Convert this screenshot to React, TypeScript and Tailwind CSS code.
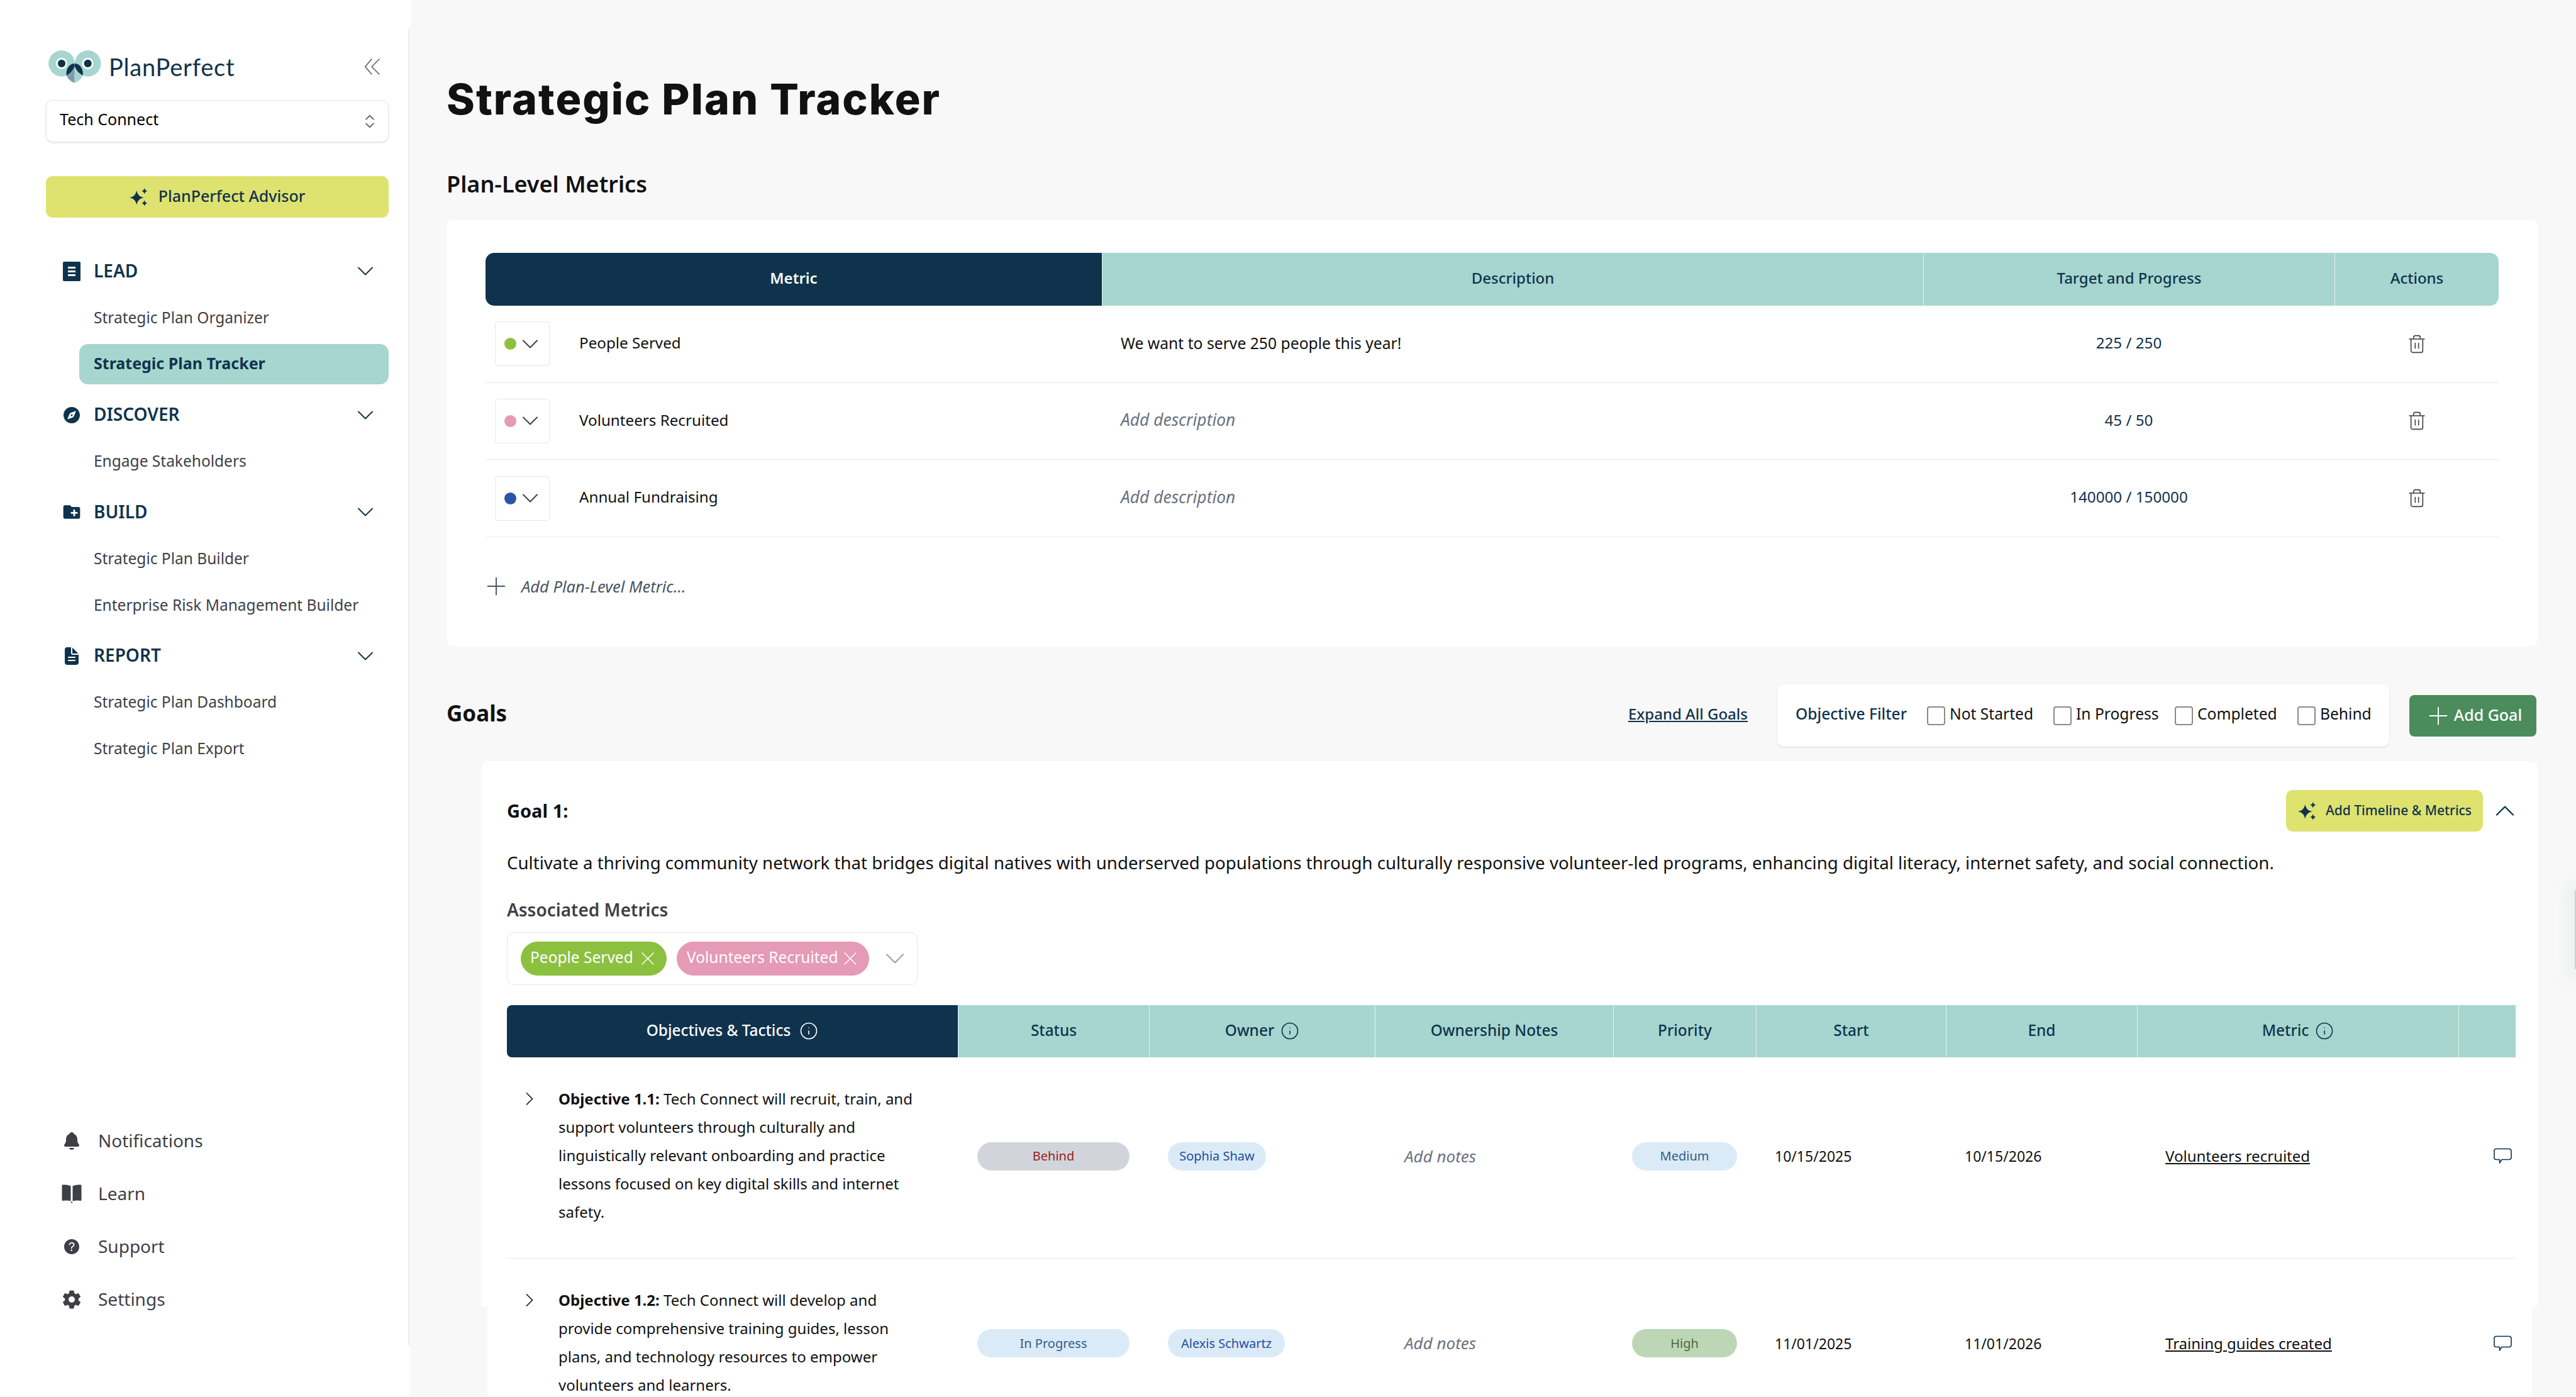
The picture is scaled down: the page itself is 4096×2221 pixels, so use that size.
import { ChevronDown, ChevronRight, ChevronUp, ChevronsUpDown, Info, Plus, Trash2, X } from "lucide-react";
import { IoCompass, IoDocumentText, IoHelpCircle, IoNotifications, IoSettingsSharp } from "react-icons/io5";
import { MdCreateNewFolder } from "react-icons/md";
import type { ReactNode } from "react";

const NAVY = "#0f334d";

function star(cx: number, cy: number, r: number) {
  return `M${cx} ${cy - r}Q${cx + r * 0.15} ${cy - r * 0.15} ${cx + r} ${cy}Q${cx + r * 0.15} ${cy + r * 0.15} ${cx} ${cy + r}Q${cx - r * 0.15} ${cy + r * 0.15} ${cx - r} ${cy}Q${cx - r * 0.15} ${cy - r * 0.15} ${cx} ${cy - r}Z`;
}

function Sparkles({ className }: { className: string }) {
  return (
    <svg viewBox="0 0 24 24" className={className} fill={NAVY}>
      <path d={star(9, 13, 9)} />
      <path d={star(19, 4.5, 4)} />
      <path d={star(19, 20, 4)} />
    </svg>
  );
}

function Logo() {
  return (
    <svg viewBox="20 15 120 80" className="ml-[4px] w-[84px] h-[56px] shrink-0">
      <circle cx="50" cy="47.7" r="29.7" fill="#a6d6cf" />
      <circle cx="109.5" cy="47.7" r="29.7" fill="#a6d6cf" />
      <circle cx="50" cy="47.7" r="13" fill="#fff" />
      <circle cx="109.5" cy="47.7" r="13" fill="#fff" />
      <circle cx="50" cy="47.7" r="8.7" fill={NAVY} />
      <circle cx="109.5" cy="47.7" r="8.7" fill={NAVY} />
      <path d="M61 75C65 85 72 89 79.5 92V54C74 62 68 71 61 75Z" fill="#7b9fb0" />
      <path d="M98 75C94 85 87 89 79.5 92V54C85 62 91 71 98 75Z" fill="#a6d6cf" />
      <path d="M79 48C67 48 59 62 61 75C69 71 76 63 79.5 54Z" fill={NAVY} />
      <path d="M80 48C92 48 100 62 98 75C90 71 83 63 79.5 54Z" fill={NAVY} />
    </svg>
  );
}

function LeadIcon() {
  return (
    <svg viewBox="0 0 28 31" className="w-[28px] h-[31px]">
      <rect width="28" height="31" rx="2" fill={NAVY} />
      <rect x="8" y="8" width="12" height="3" fill="#fff" />
      <rect x="8" y="14" width="12" height="3" fill="#fff" />
      <rect x="8" y="20" width="12" height="3" fill="#fff" />
    </svg>
  );
}

function BookIcon() {
  return (
    <svg viewBox="0 0 32 32" className="w-[32px] h-[32px]" fill="#3f3f46">
      <path d="M2 1.5Q9 1 14.5 3.5V27.5Q8 26 2 27Q0.5 27 0.5 25.5V3Q0.5 1.5 2 1.5Z" />
      <path d="M30 1.5Q23 1 17.5 3.5V27.5Q24 26 30 27Q31.5 27 31.5 25.5V3Q31.5 1.5 30 1.5Z" />
      <rect x="15.3" y="28" width="1.4" height="3" />
    </svg>
  );
}

const navGroups: { title: string; icon: ReactNode; items: string[] }[] = [
  { title: "LEAD", icon: <LeadIcon />, items: ["Strategic Plan Organizer", "Strategic Plan Tracker"] },
  { title: "DISCOVER", icon: <IoCompass size={36} color={NAVY} />, items: ["Engage Stakeholders"] },
  { title: "BUILD", icon: <MdCreateNewFolder size={38} color={NAVY} />, items: ["Strategic Plan Builder", "Enterprise Risk Management Builder"] },
  { title: "REPORT", icon: <IoDocumentText size={36} color={NAVY} />, items: ["Strategic Plan Dashboard", "Strategic Plan Export"] },
];

const footerLinks: { label: string; icon: ReactNode }[] = [
  { label: "Notifications", icon: <IoNotifications size={34} /> },
  { label: "Learn", icon: <BookIcon /> },
  { label: "Support", icon: <IoHelpCircle size={38} /> },
  { label: "Settings", icon: <IoSettingsSharp size={34} /> },
];

function Sidebar() {
  return (
    <aside className="relative w-[650px] h-[2139px] shrink-0 bg-white border-r border-[#e5e7eb] flex flex-col pl-[73px] pr-[31px] pt-[80px] pb-[31px]">
      {/* Logo */}
      <div className="flex items-center h-[52px]">
        <Logo />
        <span className="ml-[12px] font-['Lato',sans-serif] text-[38px] tracking-[0.8px] text-[#0f334d]">PlanPerfect</span>
        <svg viewBox="0 0 24 26" className="ml-auto mr-[14px] w-[24px] h-[26px]" fill="none" stroke="#4b5563" strokeWidth="1.4">
          <path d="M11.2 0.5L0.8 13L11.2 25.5M23.5 0.5L11 13L23.5 25.5" />
        </svg>
      </div>

      <div className="mt-[27px] h-[67px] rounded-[11px] border border-[#e5e7eb] shadow-sm bg-white flex items-center justify-between pl-[21px] pr-[15px] text-[25px] text-black">
        <span className="pb-[6px]">Tech Connect</span>
        <ChevronsUpDown size={28} strokeWidth={1.8} className="text-[#6b7280]" />
      </div>

      <div className="mt-[54px] h-[66px] rounded-[11px] bg-[#dee26f] flex items-center justify-center gap-[16px] text-[25px] font-medium text-[#0f334d]">
        <Sparkles className="w-[30px] h-[30px]" />
        <span className="pb-[3px]">PlanPerfect Advisor</span>
      </div>

      {/* Nav */}
      <nav className="mt-[53px] flex flex-col gap-[16.5px]">
        {navGroups.map((group) => (
          <div key={group.title} className="flex flex-col gap-[10px]">
            <div className="h-[64px] flex items-center pl-[25px] pr-[15px]">
              <span className="w-[32px] flex justify-center">{group.icon}</span>
              <span className="ml-[19px] pb-[3px] text-[28px] font-semibold text-[#0f334d]">{group.title}</span>
              <ChevronDown size={44} strokeWidth={1.1} className="ml-auto text-[#0f334d]" />
            </div>
            {group.items.map((item) => {
              const active = item === "Strategic Plan Tracker";
              return (
                <div
                  key={item}
                  className={
                    active
                      ? "ml-[53px] h-[64px] rounded-[14px] bg-[#a6d6cf] flex items-center pl-[23px] pb-[3px] text-[25px] font-bold text-[#0f334d]"
                      : "ml-[53px] h-[64px] flex items-center pl-[23px] text-[24.5px] text-[#3f3f46]"
                  }
                >
                  {item}
                </div>
              );
            })}
          </div>
        ))}
      </nav>

      <div className="mt-auto flex flex-col">
        {footerLinks.map((link) => (
          <div key={link.label} className="h-[84px] flex items-center pl-[25px] text-[28px] text-[#3f3f46]">
            <span className="w-[32px] flex justify-center">{link.icon}</span>
            <span className="ml-[26px] pb-[3px]">{link.label}</span>
          </div>
        ))}
      </div>

      {/* top edge of the sidebar has no border */}
      <div className="absolute -right-[4px] top-0 w-[4px] h-[45px] bg-white" />
      <div className="absolute -right-[3px] -bottom-[82px] w-[4px] h-[82px] bg-white" />
    </aside>
  );
}

const metrics = [
  { dot: "bg-[#8cc03f]", name: "People Served", desc: "We want to serve 250 people this year!", target: "225 / 250" },
  { dot: "bg-[#e59ab5]", name: "Volunteers Recruited", desc: "", target: "45 / 50" },
  { dot: "bg-[#2a54a8]", name: "Annual Fundraising", desc: "", target: "140000 / 150000" },
];

function MetricsCard() {
  return (
    <div className="mt-[37px] rounded-[11px] bg-white pl-[62px] pr-[61px] pt-[52px] pb-[70px]">
      <div className="grid grid-cols-[980px_1306px_654px_261px] h-[84px] text-[24px] font-medium text-[#0f334d]">
        <div className="bg-[#0f334d] text-white font-semibold rounded-l-[14px] flex items-center justify-center pb-[5px]">Metric</div>
        <div className="bg-[#a6d6cf] flex items-center justify-center border-l border-[#e3f2ef] pb-[5px]">Description</div>
        <div className="bg-[#a6d6cf] flex items-center justify-center border-l border-[#e3f2ef] pb-[5px]">Target and Progress</div>
        <div className="bg-[#a6d6cf] rounded-r-[14px] flex items-center justify-center border-l border-[#e3f2ef] pb-[5px]">Actions</div>
      </div>
      {metrics.map((m) => (
        <div key={m.name} className="grid grid-cols-[980px_1306px_654px_261px] h-[122.67px] items-center border-b border-[#ececec] text-[24.2px]">
          <div className="flex items-center">
            <div className="ml-[15px] w-[87px] h-[71px] rounded-[5px] border border-[#e5e7eb] flex items-center pl-[14px]">
              <span className={`w-[19px] h-[19px] rounded-full ${m.dot}`} />
              <ChevronDown size={44} strokeWidth={1.1} className="text-[#3f3f46] shrink-0" />
            </div>
            <span className="ml-[47px] pb-[3px] text-[#111]">{m.name}</span>
          </div>
          <div className="pl-[30px] pb-[3px]">
            {m.desc ? <span className="text-[24.7px] text-[#111]">{m.desc}</span> : <span className="text-[26.4px] italic text-[#6b7280]">Add description</span>}
          </div>
          <div className="text-center text-[#0f334d] pb-[3px]">{m.target}</div>
          <div className="flex justify-center">
            <Trash2 size={32} strokeWidth={1.2} className="text-[#3f3f46]" />
          </div>
        </div>
      ))}
      <div className="mt-[54px] mb-[2px] h-[48px] flex items-center text-[25.5px] italic text-[#4b5563]">
        <Plus size={46} strokeWidth={1} className="-ml-[6px] shrink-0" />
        <span className="ml-[17px]">Add Plan-Level Metric...</span>
      </div>
    </div>
  );
}

const filters = [
  { label: "Not Started", width: "w-[201px]" },
  { label: "In Progress", width: "w-[193px]" },
  { label: "Completed", width: "w-[195px]" },
  { label: "Behind", width: "w-[120px]" },
];

function FilterBar() {
  return (
    <div className="mt-[60px] h-[100px] flex items-center">
      <h2 className="pb-[8px] text-[35px] font-bold text-[#111]">Goals</h2>
      <a className="ml-auto pb-[6px] text-[24px] font-medium text-[#0f334d] underline">Expand All Goals</a>
      <div className="ml-[47px] w-[973px] h-[99px] rounded-[11px] bg-white shadow-sm flex items-center pl-[29px] text-[24.6px] text-[#111] whitespace-nowrap">
        <span className="w-[209px] pb-[6px] font-medium text-[#0f334d]">Objective Filter</span>
        {filters.map((f) => (
          <label key={f.label} className={`flex items-center gap-[7px] shrink-0 ${f.width}`}>
            <input type="checkbox" className="appearance-none shrink-0 w-[29px] h-[30px] rounded-[4px] border-2 border-[#8a8a8a] bg-white" />
            <span className="pb-[6px]">{f.label}</span>
          </label>
        ))}
      </div>
      <button className="ml-[32px] mr-[2px] w-[202px] h-[66px] rounded-[8px] bg-[#4a8c5c] flex items-center justify-center gap-[2px] text-[25px] font-medium text-white">
        <Plus size={46} strokeWidth={1} />
        <span className="pb-[3px]">Add Goal</span>
      </button>
    </div>
  );
}

const COLS = "grid grid-cols-[717px_304px_359px_379px_227px_302px_304px_511px_91px]";

const objectives = [
  {
    id: "Objective 1.1:",
    lines: ["Tech Connect will recruit, train, and", "support volunteers through culturally and", "linguistically relevant onboarding and practice", "lessons focused on key digital skills and internet", "safety."],
    status: "Behind",
    statusClass: "bg-[#d1d5db] text-[#991b1b]",
    owner: "Sophia Shaw",
    ownerWidth: "w-[156px]",
    priority: "Medium",
    priorityClass: "bg-[#dbeaf7] text-[#2f5f8a]",
    start: "10/15/2025",
    end: "10/15/2026",
    metric: "Volunteers recruited",
  },
  {
    id: "Objective 1.2:",
    lines: ["Tech Connect will develop and", "provide comprehensive training guides, lesson", "plans, and technology resources to empower", "volunteers and learners."],
    status: "In Progress",
    statusClass: "bg-[#dbeaf7] text-[#2f5f8a]",
    owner: "Alexis Schwartz",
    ownerWidth: "w-[186px]",
    priority: "High",
    priorityClass: "bg-[#bdd6b5] text-[#4a6b3a]",
    start: "11/01/2025",
    end: "11/01/2026",
    metric: "Training guides created",
  },
];

function HeaderCell({ children, info }: { children: ReactNode; info?: boolean }) {
  return (
    <div className="bg-[#a6d6cf] border-l border-[#e3f2ef] flex items-center justify-center gap-[10px]">
      <span className="pb-[3px]">{children}</span>
      {info && <Info size={30} strokeWidth={1.3} />}
    </div>
  );
}

function GoalCard() {
  return (
    <div className="mt-[22px] ml-[56px] rounded-t-[11px] bg-white pl-[40px] pr-[34px] pt-[46px]">
      <div className="h-[66px] flex items-center">
        <h3 className="text-[29px] font-bold text-[#111]">Goal 1:</h3>
        <button className="ml-auto w-[313px] h-[66px] rounded-[11px] bg-[#dee26f] flex items-center pl-[19px] gap-[14px] text-[21px] font-medium text-[#0f334d]">
          <Sparkles className="w-[30px] h-[30px]" />
          Add Timeline &amp; Metrics
        </button>
        <ChevronUp size={52} strokeWidth={1.1} className="ml-[9px] mr-[-8px] text-[#0f334d]" />
      </div>
      <p className="mt-[27px] text-[27.65px] leading-[44px] text-[#111] whitespace-nowrap">
        Cultivate a thriving community network that bridges digital natives with underserved populations through culturally responsive volunteer-led programs, enhancing digital literacy, internet safety, and social connection.
      </p>
      <div className="mt-[33px] text-[28px] leading-[40px] font-semibold text-[#3f3f46]">Associated Metrics</div>
      <div className="mt-[16px] w-[653px] h-[84px] rounded-[11px] border border-[#e5e7eb] flex items-center pl-[21px] text-[24.5px] text-white">
        <span className="w-[232px] h-[54px] rounded-full bg-[#8cc03f] flex items-center pl-[15px]">
          <span className="pb-[4px]">People Served</span>
          <X size={36} strokeWidth={1} className="ml-auto mr-[12px]" />
        </span>
        <span className="ml-[16px] w-[306px] h-[54px] rounded-full bg-[#e59ab5] flex items-center pl-[16px]">
          <span className="pb-[4px]">Volunteers Recruited</span>
          <X size={36} strokeWidth={1} className="ml-auto mr-[12px]" />
        </span>
        <ChevronDown size={52} strokeWidth={1} className="ml-[15px] text-[#9ca3af]" />
      </div>

      <div className={`${COLS} mt-[32px] h-[83px] text-[24.4px] font-medium text-[#0f334d]`}>
        <div className="bg-[#0f334d] text-white rounded-l-[8px] flex items-center justify-center gap-[14px]">
          <span className="pb-[3px]">Objectives &amp; Tactics</span>
          <Info size={30} strokeWidth={1.3} />
        </div>
        <HeaderCell>Status</HeaderCell>
        <HeaderCell info>Owner</HeaderCell>
        <HeaderCell>Ownership Notes</HeaderCell>
        <HeaderCell>Priority</HeaderCell>
        <HeaderCell>Start</HeaderCell>
        <HeaderCell>End</HeaderCell>
        <HeaderCell info>Metric</HeaderCell>
        <HeaderCell>{""}</HeaderCell>
      </div>

      {objectives.map((o) => (
        <div key={o.id} className={`${COLS} items-center border-b border-[#ececec] text-[24px] text-[#111] pt-[43px] pb-[51px]`}>
          <div className="flex items-start pl-[18px]">
            <ChevronRight size={36} strokeWidth={1.1} className="mt-[5px] shrink-0" />
            <div className="ml-[28px] leading-[45px] whitespace-nowrap">
              {o.lines.map((line, i) => (
                <div key={line}>
                  {i === 0 && <b className="font-bold">{o.id} </b>}
                  {line}
                </div>
              ))}
            </div>
          </div>
          <div className="pl-[31px] pt-[4px]">
            <div className={`w-[242px] h-[45px] rounded-full flex items-center justify-center text-[20px] ${o.statusClass}`}>{o.status}</div>
          </div>
          <div className="pl-[30px] pt-[4px]">
            <div className={`${o.ownerWidth} h-[45px] rounded-full bg-[#dbeaf7] flex items-center justify-center text-[20px] text-[#1e4fa3]`}>{o.owner}</div>
          </div>
          <div className="pl-[47px] pt-[4px] text-[26px] italic text-[#6b7280]">Add notes</div>
          <div className="pl-[30px] pt-[4px]">
            <div className={`w-[167px] h-[45px] rounded-full flex items-center justify-center text-[20px] ${o.priorityClass}`}>{o.priority}</div>
          </div>
          <div className="pl-[30px] pt-[4px] text-[23px]">{o.start}</div>
          <div className="pl-[30px] pt-[4px] text-[23px]">{o.end}</div>
          <div className="pl-[45px] pt-[4px] underline">{o.metric}</div>
          <div className="pl-[56px] pt-[4px]">
            <svg viewBox="0 0 29 26" className="w-[29px] h-[26px]" fill="none" stroke={NAVY} strokeWidth="1.6" strokeLinejoin="round">
              <path d="M4 1.5h21a3 3 0 0 1 3 3v11a3 3 0 0 1-3 3H13l-3.5 5.5V18.5H4a3 3 0 0 1-3-3v-11a3 3 0 0 1 3-3z" />
            </svg>
          </div>
        </div>
      ))}
    </div>
  );
}

export default function App() {
  return (
    <div className="relative flex w-[4096px] h-[2221px] overflow-hidden bg-[#f8f8f8] font-['Noto_Sans',sans-serif]">
      <div className="h-[2221px] shrink-0 bg-white">
        <Sidebar />
      </div>
      <main className="flex-1 min-w-0 pl-[60px] pr-[61px] pt-[112px]">
        <h1 className="font-['Inter',sans-serif] text-[68px] tracking-[2px] leading-[90px] font-extrabold text-[#111]">Strategic Plan Tracker</h1>
        <h2 className="mt-[71px] text-[36px] leading-[40px] font-semibold text-[#111]">Plan-Level Metrics</h2>
        <MetricsCard />
        <FilterBar />
        <GoalCard />
      </main>

      {/* the lower part of the card sits a few pixels narrower */}
      <div className="absolute left-[766px] top-[2077px] w-[9px] h-[144px] bg-[#f8f8f8]" />
      <div className="absolute left-[4026px] top-[2077px] w-[9px] h-[144px] bg-[#f8f8f8]" />
      <div className="absolute right-0 top-[1415px] w-[2px] h-[126px] bg-[#cfcfcf] shadow-[0_0_24px_10px_rgba(210,214,214,0.35)]" />
    </div>
  );
}
